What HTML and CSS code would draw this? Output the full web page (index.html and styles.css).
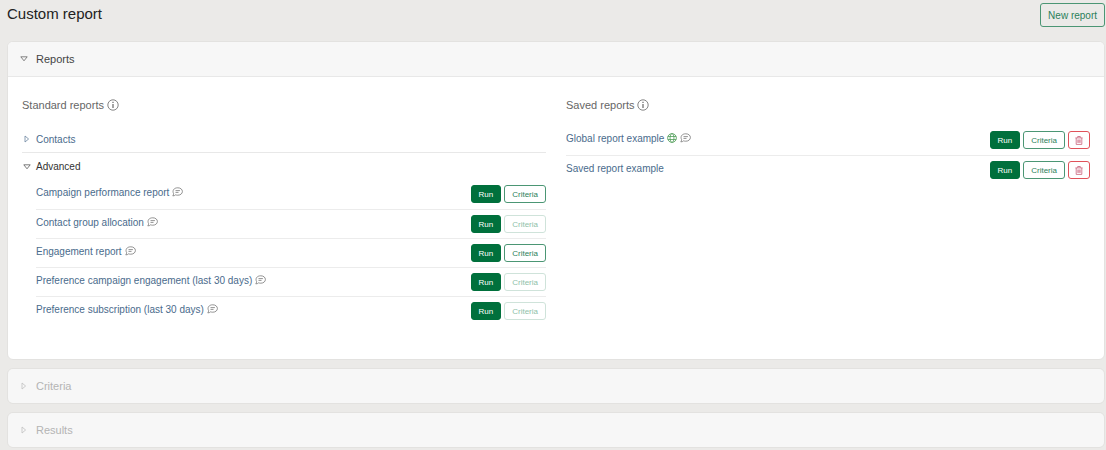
FILE: index.html
```html
<!DOCTYPE html>
<html lang="en">
<head>
  <meta charset="UTF-8">
  <meta name="viewport" content="width=device-width, initial-scale=1.0">
  <title>Custom report</title>
  <link rel="stylesheet" href="styles.css">
</head>
<body>
  <!-- Shared icons -->
  <svg class="sprite" aria-hidden="true">
    <symbol id="icon-down" viewBox="0 0 8 8"><path d="M.8 1.8h6.4L4 5.8z"/></symbol>
    <symbol id="icon-right" viewBox="0 0 8 8"><path d="M2 1v6l3.6-3z"/></symbol>
    <symbol id="icon-info" viewBox="0 0 12 12"><circle cx="6" cy="6" r="5.2"/><path stroke-width="1.2" d="M6 5v4M6 2.8v1.2"/></symbol>
    <symbol id="icon-comment" viewBox="0 0 11 10"><path d="M1.600 6.600C.1 3.600 1.800.8 5.800.8c2.700 0 4.600 1.600 4.600 3.700S8.500 8.200 5.800 8.200c-.8 0-1.500-.1-2.100-.4C2.900 8.500 1.900 8.900.8 8.900c.5-.6.8-1.400.8-2.300zM3.500 3.600h4.400M3.500 5.400h3"/></symbol>
    <symbol id="icon-globe" viewBox="0 0 10 10"><circle cx="5" cy="5" r="4.400"/><ellipse cx="5" cy="5" rx="2" ry="4.400"/><path d="M.9 3.500h8.200M.9 6.500h8.200"/></symbol>
    <symbol id="icon-trash" viewBox="0 0 8 9"><path d="M.4 1.900h7.200M2.700 1.700V.5h2.600v1.200M1.200 2v6.400h5.600V2M2.900 3.500v3.400M4 3.500v3.400M5.100 3.500v3.400"/></symbol>
  </svg>

  <header class="page-header">
    <h1>Custom report</h1>
    <button class="btn btn-new" type="button">New report</button>
  </header>

  <main class="panels">
    <section class="panel">
      <button class="panel-toggle" type="button" aria-expanded="true">
        <svg class="arrow"><use href="#icon-down"/></svg>Reports
      </button>
      <div class="panel-body">
        <div class="column">
          <h2>Standard reports <svg class="info"><use href="#icon-info"/></svg></h2>
          <button class="group-toggle" type="button" aria-expanded="false">
            <svg class="arrow"><use href="#icon-right"/></svg>Contacts
          </button>
          <button class="group-toggle open" type="button" aria-expanded="true">
            <svg class="arrow"><use href="#icon-down"/></svg>Advanced
          </button>
          <ul class="report-list nested">
            <li>
              <div class="name"><a href="#">Campaign performance report</a><svg class="comment"><use href="#icon-comment"/></svg></div>
              <div class="actions"><button class="btn btn-run" type="button">Run</button><button class="btn" type="button">Criteria</button></div>
            </li>
            <li>
              <div class="name"><a href="#">Contact group allocation</a><svg class="comment"><use href="#icon-comment"/></svg></div>
              <div class="actions"><button class="btn btn-run" type="button">Run</button><button class="btn" type="button" disabled>Criteria</button></div>
            </li>
            <li>
              <div class="name"><a href="#">Engagement report</a><svg class="comment"><use href="#icon-comment"/></svg></div>
              <div class="actions"><button class="btn btn-run" type="button">Run</button><button class="btn" type="button">Criteria</button></div>
            </li>
            <li>
              <div class="name"><a href="#">Preference campaign engagement (last 30 days)</a><svg class="comment"><use href="#icon-comment"/></svg></div>
              <div class="actions"><button class="btn btn-run" type="button">Run</button><button class="btn" type="button" disabled>Criteria</button></div>
            </li>
            <li>
              <div class="name"><a href="#">Preference subscription (last 30 days)</a><svg class="comment"><use href="#icon-comment"/></svg></div>
              <div class="actions"><button class="btn btn-run" type="button">Run</button><button class="btn" type="button" disabled>Criteria</button></div>
            </li>
          </ul>
        </div>

        <div class="column">
          <h2>Saved reports <svg class="info"><use href="#icon-info"/></svg></h2>
          <ul class="report-list">
            <li>
              <div class="name"><a href="#">Global report example</a><svg class="globe"><use href="#icon-globe"/></svg><svg class="comment"><use href="#icon-comment"/></svg></div>
              <div class="actions"><button class="btn btn-run" type="button">Run</button><button class="btn" type="button">Criteria</button><button class="btn btn-delete" type="button" aria-label="Delete"><svg><use href="#icon-trash"/></svg></button></div>
            </li>
            <li>
              <div class="name"><a href="#">Saved report example</a></div>
              <div class="actions"><button class="btn btn-run" type="button">Run</button><button class="btn" type="button">Criteria</button><button class="btn btn-delete" type="button" aria-label="Delete"><svg><use href="#icon-trash"/></svg></button></div>
            </li>
          </ul>
        </div>
      </div>
    </section>

    <section class="panel">
      <button class="panel-toggle" type="button" aria-expanded="false" disabled>
        <svg class="arrow"><use href="#icon-right"/></svg>Criteria
      </button>
    </section>

    <section class="panel">
      <button class="panel-toggle" type="button" aria-expanded="false" disabled>
        <svg class="arrow"><use href="#icon-right"/></svg>Results
      </button>
    </section>
  </main>
</body>
</html>
```
FILE: styles.css
```css
* {
  box-sizing: border-box;
}

body {
  margin: 0;
  font-family: "Liberation Sans", Arial, sans-serif;
  font-size: 10px;
  color: #333;
  background-color: #ebeae8;
}

svg {
  flex: none;
  fill: none;
  stroke: currentColor;
  stroke-width: 0.8;
}

.sprite {
  display: none;
}

.page-header {
  display: flex;
  justify-content: space-between;
  align-items: flex-start;
  padding: 3px 1px 0 7px;
}

h1 {
  margin: 0;
  font-size: 15px;
  font-weight: normal;
  line-height: 22px;
  color: #222;
}

.btn {
  display: flex;
  align-items: center;
  justify-content: center;
  height: 18px;
  padding: 0 7px;
  font-family: inherit;
  font-size: 8px;
  color: #2c7f5b;
  background-color: #fff;
  border: 1px solid #4b9674;
  border-radius: 3px;
  cursor: pointer;
}

.btn:disabled {
  color: #8fbfa9;
  border-color: #cfe3da;
  cursor: default;
}

.btn-new {
  height: 24px;
  font-size: 10px;
  background-color: transparent;
}

.btn-run {
  color: #fff;
  background-color: #00703c;
  border-color: #00703c;
}

.btn-delete {
  width: 22px;
  padding: 0;
  color: #c9607a;
  border-color: #e0525a;
}

.btn-delete svg {
  width: 8px;
  height: 9px;
}

.panels {
  display: flex;
  flex-direction: column;
  gap: 8px;
  padding: 14px 1px 0 7px;
}

.panel {
  background-color: #fff;
  border: 1px solid #e3e2e0;
  border-radius: 6px;
  overflow: hidden;
}

.panel-toggle {
  display: flex;
  align-items: center;
  gap: 8px;
  width: 100%;
  height: 34px;
  padding: 0 12px 1px;
  font-family: inherit;
  font-size: 11px;
  color: #444;
  background-color: #f7f7f7;
  border: none;
}

.panel-toggle:disabled {
  color: #b4b4b4;
}

.arrow {
  width: 8px;
  height: 8px;
  opacity: 0.8;
}

.panel-body {
  display: grid;
  grid-template-columns: 1fr 1fr;
  gap: 20px;
  padding: 20px 14px 34px;
  border-top: 1px solid #e8e8e8;
}

h2 {
  display: flex;
  align-items: center;
  gap: 3px;
  margin: 0 0 13px;
  font-size: 11px;
  font-weight: normal;
  line-height: 16px;
  color: #666;
}

.info {
  width: 12px;
  height: 12px;
}

.group-toggle {
  display: flex;
  align-items: center;
  gap: 5px;
  width: 100%;
  height: 27px;
  padding: 0 1px;
  font-family: inherit;
  font-size: 10px;
  color: #4a6b8c;
  background: none;
  border: none;
  border-bottom: 1px solid #e8e8e8;
}

.group-toggle.open {
  color: #333;
  border-bottom: none;
}

.report-list {
  margin: 0;
  padding: 0;
  list-style: none;
}

.nested {
  padding-left: 14px;
}

.report-list li {
  display: flex;
  justify-content: space-between;
  align-items: flex-start;
  padding: 5px 0 6px;
}

/* the divider takes one pixel of the row */
.report-list li + li {
  padding-bottom: 5px;
  border-top: 1px solid #ececec;
}

.name {
  display: flex;
  align-items: center;
  gap: 3px;
  height: 14px;
}

.name a {
  color: #4a6b8c;
  text-decoration: none;
}

.actions {
  display: flex;
  gap: 3px;
}

.comment {
  width: 11px;
  height: 10px;
  color: #777;
}

.globe {
  width: 10px;
  height: 10px;
  color: #4f9d58;
}
```
